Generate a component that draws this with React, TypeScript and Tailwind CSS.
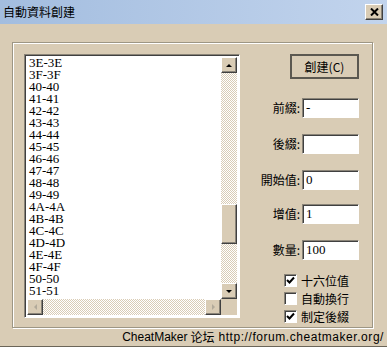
const items = [
  "3E-3E", "3F-3F", "40-40", "41-41", "42-42", "43-43", "44-44", "45-45", "46-46", "47-47",
  "48-48", "49-49", "4A-4A", "4B-4B", "4C-4C", "4D-4D", "4E-4E", "4F-4F", "50-50", "51-51",
];

const raised =
  "bg-[#d9ccb5] border border-t-white border-l-white border-r-[#404040] border-b-[#404040] shadow-[inset_-1px_-1px_0_#8a8478]";
const sunken =
  "border border-t-[#8a8478] border-l-[#8a8478] border-r-white border-b-white shadow-[inset_1px_1px_0_#404040]";
const track = "bg-[repeating-conic-gradient(#ffffff_0_25%,#d9ccb5_0_50%)] bg-[length:2px_2px]";
const cjk = { fontFamily: '"Noto Sans CJK TC", "DejaVu Sans", sans-serif' };
const serif = { fontFamily: '"Liberation Serif", serif' };

const Arrow = ({ dir, dim }: { dir: "up" | "down" | "left" | "right"; dim?: boolean }) => {
  const pts = {
    up: "1,4 4,1 7,4",
    down: "1,1 4,4 7,1",
    left: "4,1 1,4 4,7",
    right: "1,1 4,4 1,7",
  }[dir];
  const vert = dir === "up" || dir === "down";
  return (
    <svg width={vert ? 8 : 5} height={vert ? 5 : 8} viewBox={vert ? "0 0 8 5" : "0 0 5 8"}>
      <polygon points={pts} fill={dim ? "#b2aa9a" : "#000"} />
    </svg>
  );
};

const Field = ({ label, value, mt }: { label: string; value: string; mt: string }) => (
  <div className={`flex items-center justify-end h-[20px] ${mt}`}>
    <span className="text-[12px] leading-[14px] text-black mr-[2px] whitespace-nowrap" style={cjk}>
      {label}:
    </span>
    <div
      className={`shrink-0 box-border w-[57px] h-[20px] bg-white ${sunken} pl-[3px] text-[13px] leading-[17px] text-black`}
      style={serif}
    >
      {value}
    </div>
  </div>
);

const Check = ({ label, on, mt }: { label: string; on: boolean; mt: string }) => (
  <div className={`flex items-center h-[13px] ${mt}`}>
    <div className={`shrink-0 w-[13px] h-[13px] bg-white ${sunken} flex items-center justify-center`}>
      {on && (
        <svg width="9" height="9" viewBox="0 0 9 9">
          <path d="M1 4 L3.5 6.5 L8 1.5" stroke="#000" strokeWidth="2" fill="none" />
        </svg>
      )}
    </div>
    <span className="ml-[4px] text-[12px] leading-[14px] text-black whitespace-nowrap" style={cjk}>
      {label}
    </span>
  </div>
);

export default function App() {
  return (
    <div className="w-[387px] h-[347px] bg-[#d9ccb5] flex flex-col border-b border-b-[#6b6558] overflow-hidden">
      <div className="shrink-0 h-[24px] flex items-center justify-between bg-gradient-to-r from-[#a3bddf] to-[#c2d4ed] pl-[3px] pr-[4px]">
        <span className="text-[12px] text-black" style={cjk}>
          自動資料創建
        </span>
        <div className={`w-[18px] h-[16px] ${raised} flex items-center justify-center`}>
          <svg width="9" height="8" viewBox="0 0 9 8">
            <path d="M1 0.5 L8 7.5 M8 0.5 L1 7.5" stroke="#000" strokeWidth="2" />
          </svg>
        </div>
      </div>

      <div className="shrink-0 pl-[12px] pt-[18px]">
        <div className="w-[361px] h-[286px] overflow-hidden border border-[#9d9684] shadow-[inset_1px_1px_0_#fff,1px_1px_0_#fff] flex pl-[11px] pt-[11px]">
          <div
            className={`shrink-0 w-[216px] h-[264px] bg-white ${sunken} p-[2px] grid grid-cols-[minmax(0,1fr)_16px] grid-rows-[minmax(0,1fr)_16px]`}
          >
            <div className="pl-[2px] text-[13px] leading-[12px] text-black overflow-hidden" style={serif}>
              {items.map((it) => (
                <div key={it} className="h-[12px]">
                  {it}
                </div>
              ))}
            </div>
            <div className={`flex flex-col ${track}`}>
              <div className={`h-[16px] ${raised} flex items-center justify-center`}>
                <Arrow dir="up" />
              </div>
              <div className="h-[131px]" />
              <div className={`h-[40px] ${raised}`} />
              <div className="flex-1" />
              <div className={`h-[16px] ${raised} flex items-center justify-center`}>
                <Arrow dir="down" />
              </div>
            </div>
            <div className={`flex ${track}`}>
              <div className={`w-[16px] ${raised} flex items-center justify-center`}>
                <Arrow dir="left" dim />
              </div>
              <div className="flex-1" />
              <div className={`w-[16px] ${raised} flex items-center justify-center`}>
                <Arrow dir="right" dim />
              </div>
            </div>
            <div className="bg-[#d9ccb5]" />
          </div>

          <div className="shrink-0 ml-[12px] w-[107px] flex flex-col">
            <div className="flex justify-end">
              <div
                className="w-[69px] h-[25px] border-2 border-[#5b5850] bg-[#d9ccb5] flex items-center justify-center text-[12px] text-black"
                style={cjk}
              >
                創建(C)
              </div>
            </div>
            <Field label="前綴" value="-" mt="mt-[19px]" />
            <Field label="後綴" value="" mt="mt-[16px]" />
            <Field label="開始值" value="0" mt="mt-[16px]" />
            <Field label="增值" value="1" mt="mt-[14px]" />
            <Field label="數量" value="100" mt="mt-[16px]" />
            <div className="pl-[32px]">
              <Check label="十六位值" on mt="mt-[14px]" />
              <Check label="自動換行" on={false} mt="mt-[5px]" />
              <Check label="制定後綴" on mt="mt-[5px]" />
            </div>
          </div>
        </div>
      </div>

      <div className="flex-1 flex items-center justify-end pr-[3px] text-[12px] text-black whitespace-nowrap">
        <span style={{ fontFamily: '"Liberation Sans", sans-serif' }}>CheatMaker</span>
        <span className="ml-[3px]" style={{ fontFamily: '"Noto Sans CJK SC", sans-serif' }}>
          论坛
        </span>
        <span className="ml-[4px] tracking-[0.55px]" style={{ fontFamily: '"Liberation Sans", sans-serif' }}>
          http://forum.cheatmaker.org/
        </span>
      </div>
    </div>
  );
}
